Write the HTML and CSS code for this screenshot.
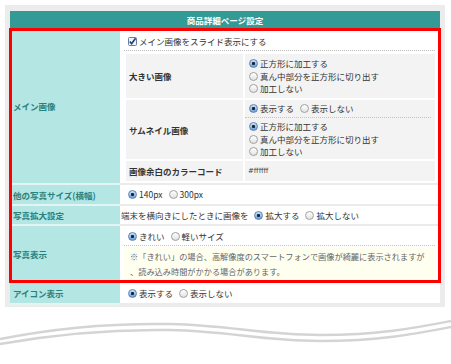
FILE: index.html
```html
<!DOCTYPE html>
<html lang="ja">
   <head>
      <meta charset="UTF-8">
      <title>商品詳細ページ設定</title>
      <link rel="stylesheet" href="styles.css">
   </head>
   <body>
      <div class="frame">
         <div class="panel">
            <div class="panel-head">商品詳細ページ設定</div>
            <div class="marked">
               <div class="row">
                  <div class="label">メイン画像</div>
                  <div class="value">
                     <div class="check-line">
                        <svg class="check" width="9" height="9" viewBox="0 0 9 9">
                           <rect x="0.5" y="0.5" width="8" height="8" rx="1" fill="#eef3fa" stroke="#6a7f99"/>
                           <path d="M1.8 4.6 L3.6 6.8 L7.6 1.2" fill="none" stroke="#1d3f73" stroke-width="1.6"/>
                        </svg>メイン画像をスライド表示にする
                     </div>
                     <div class="sub">
                        <div class="sub-label">大きい画像</div>
                        <div class="sub-value big">
                           <div><span class="radio on"></span>正方形に加工する</div>
                           <div><span class="radio"></span>真ん中部分を正方形に切り出す</div>
                           <div><span class="radio"></span>加工しない</div>
                        </div>
                        <div class="sub-label">サムネイル画像</div>
                        <div class="sub-value thumb">
                           <div class="split"><span class="radio on"></span>表示する<span class="radio gap"></span>表示しない</div>
                           <div class="after">
                              <div><span class="radio on"></span>正方形に加工する</div>
                              <div><span class="radio"></span>真ん中部分を正方形に切り出す</div>
                              <div><span class="radio"></span>加工しない</div>
                           </div>
                        </div>
                        <div class="sub-label color">画像余白のカラーコード</div>
                        <div class="sub-value color code">#ffffff</div>
                     </div>
                  </div>
               </div>
               <div class="row">
                  <div class="label">他の写真サイズ(横幅)</div>
                  <div class="value line size"><span class="radio on"></span>140px<span class="radio gap"></span>300px</div>
               </div>
               <div class="row">
                  <div class="label">写真拡大設定</div>
                  <div class="value line zoom">端末を横向きにしたときに画像を <span class="radio on"></span>拡大する<span class="radio gap"></span>拡大しない</div>
               </div>
               <div class="row last">
                  <div class="label">写真表示</div>
                  <div class="value">
                     <div class="split photo"><span class="radio on"></span>きれい<span class="radio gap"></span>軽いサイズ</div>
                     <div class="note">※「きれい」の場合、高解像度のスマートフォンで画像が綺麗に表示されますが<br>、読み込み時間がかかる場合があります。</div>
                  </div>
               </div>
            </div>
            <div class="row">
               <div class="label">アイコン表示</div>
               <div class="value line icon"><span class="radio on"></span>表示する<span class="radio gap"></span>表示しない</div>
            </div>
         </div>
      </div>
      <svg class="wave" width="451" height="50" viewBox="0 0 451 50">
         <path d="M0 32 C50 22 110 16 170 17 S260 28 320 28 S420 20 451 14" fill="none" stroke="#d4d4d4" stroke-width="2.5"/>
         <path d="M0 37 C50 28 110 22 170 23 S260 34 320 34 S420 26 451 20" fill="none" stroke="#d4d4d4" stroke-width="2.5"/>
      </svg>
   </body>
</html>
```

FILE: styles.css
```css
body { margin: 0; background: #fff; color: #333; font-family: "Noto Sans CJK JP", "Noto Sans", sans-serif; font-size: 8.5px; }
.frame { width: 430px; margin: 5px 0 0 5px; padding: 6px 5px 2px; background: #ececec; }
.panel { background: #fff; }
.panel-head { height: 18px; line-height: 18px; background: #349a96; color: #fff; font-weight: bold; text-align: center; }
.marked { position: relative; z-index: 1; outline: 3px solid #f00; outline-offset: -2px; }
.row { display: grid; grid-template-columns: 110px 1fr; }
.label { display: flex; align-items: center; padding-left: 3px; background: #b4e6e4; color: #2a817c; font-weight: bold; border-bottom: 2px solid #e3f4f3; }
.value { padding: 0 5px 2px 4px; border-bottom: 2px solid #ebebeb; }
.row.last .label, .row.last .value { border-bottom: none; }
.check-line { padding: 6px 0 2px; line-height: 13px; border-bottom: 1px dotted #bbb; }
.check { vertical-align: middle; margin: 0 2px 0 4px; position: relative; top: -1px; }
.sub { display: grid; grid-template-columns: 117px 190px; gap: 2px; margin: 3px 0 0 2px; }
.sub-label { display: flex; align-items: center; padding-left: 3px; background: #f3f3f3; font-weight: bold; }
.sub-value { background: #f3f3f3; line-height: 12.5px; }
.sub-value.big { padding: 3px 0 3.5px; }
.sub-value.thumb { padding: 2px 0 1.5px; }
.sub-value .split { padding-bottom: 2px; border-bottom: 1px dotted #c4c4c4; margin-right: 4px; }
.sub-value .after { padding-top: 2.5px; }
.sub-label.color, .sub-value.color { height: 20px; line-height: 20px; }
.code { padding-left: 3px; font-family: "DejaVu Sans", sans-serif; font-size: 7px; color: #444; }
.line { padding-bottom: 0; }
.size { line-height: 19px; }
.zoom { line-height: 18px; padding-left: 1px; }
.icon { line-height: 19px; padding-top: 2px; }
.photo { padding: 4px 0 2.5px; line-height: 12px; border-bottom: 1px dotted #c4c4c4; }
.note { margin-top: 1.5px; padding: 2px 6px; line-height: 14.5px; background: #fffff0; color: #666; font-size: 8.2px; white-space: nowrap; }
.radio { display: inline-block; box-sizing: border-box; width: 9px; height: 9px; margin: 0 2px 0 4px; border: 1px solid #a0a0a0; border-radius: 50%; background: linear-gradient(#fff, #e2e2e2); vertical-align: middle; position: relative; top: -1px; }
.radio.gap { margin-left: 6px; }
.radio.on { border-color: #5a84b6; background: radial-gradient(circle, #14243a 0 1.3px, transparent 1.8px), linear-gradient(#cfe2f7, #6b9fd8); }
.wave { display: block; }
```
